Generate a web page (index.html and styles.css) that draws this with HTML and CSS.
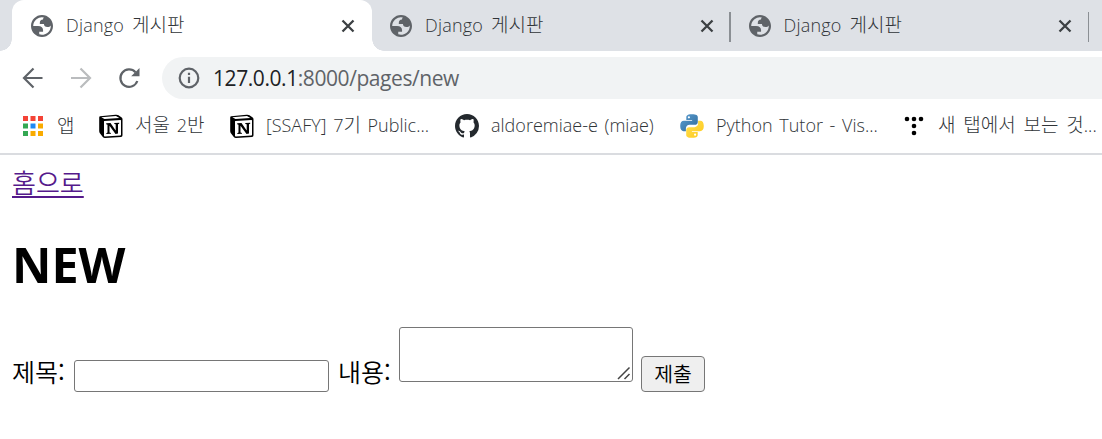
FILE: index.html
```html
<!DOCTYPE html>
<html lang="ko">
<head>
<meta charset="utf-8">
<title>Django 게시판</title>
<link rel="stylesheet" href="styles.css">
</head>
<body>
<svg class="defs" width="0" height="0">
  <symbol id="globe" viewBox="2 2 20 20">
    <path fill="#5f6368" fill-rule="evenodd" d="M12 2c5.523 0 10 4.477 10 10s-4.477 10-10 10S2 17.523 2 12 6.477 2 12 2zM4 12h4.400c3.407.022 4.922 1.730 4.543 5.127H9.488v2.470a8.004 8.004 0 0 0 10.498-8.083C19.327 12.504 18.332 13 17 13c-2.137 0-3.206-.916-3.206-2.750h-3.748c-.274-2.728.683-4.092 2.870-4.092 0-.975.327-1.597.811-1.970A8 8 0 0 0 4 12z"/>
  </symbol>
  <symbol id="close" viewBox="0 0 14 14">
    <path d="M1.500 1.500L12.500 12.500M12.500 1.500L1.500 12.500" fill="none" stroke="#3c4043" stroke-width="2.300"/>
  </symbol>
  <symbol id="notion" viewBox="0 0 24 24">
    <path d="M1.200 2.300L16.500.7Q18.500.5 19.500 1.300L22.700 3.600Q23.500 4.200 23.500 5.200V21.200Q23.500 22.800 22 23L6 24Q4.600 24 3.800 23L.9 19.300Q.2 18.300.2 17V3.500Q.2 2.400 1.200 2.300Z" fill="#000"/>
    <path d="M2.300 3.300L17 2.100L20.300 4.100L5.500 5.100ZM5.300 7L21.500 6Q22 6 22 6.600V20.800Q22 21.400 21.300 21.500L5.800 22.400Q5 22.400 5 21.700V7.500Q5 7 5.300 7Z" fill="#fff"/>
    <path d="M7.200 9.300L11.500 9L16.700 16.500V10.300L15.300 9.900V9L20.200 8.700V9.700L19 10.300V19.600L16.500 19.900L10.500 11.800V18.400L12 19V19.800L7.300 20.100V19.200L8.500 18.600V10.800L7.200 10.200Z" fill="#000"/>
  </symbol>
</svg>

<div class="tabs">
  <div class="tab active"><svg class="fav"><use href="#globe"/></svg><span class="label">Django <span class="ko">게시판</span></span><svg class="x"><use href="#close"/></svg></div>
  <div class="tab"><svg class="fav"><use href="#globe"/></svg><span class="label">Django <span class="ko">게시판</span></span><svg class="x"><use href="#close"/></svg><i class="sep"></i></div>
  <div class="tab"><svg class="fav"><use href="#globe"/></svg><span class="label">Django <span class="ko">게시판</span></span><svg class="x"><use href="#close"/></svg><i class="sep"></i></div>
</div>

<div class="toolbar">
  <svg class="nav" viewBox="0 0 22 22"><path d="M20.500 11H2.500M11.500 1.500L2 11L11.500 20.500"/></svg>
  <svg class="nav off" viewBox="0 0 22 22"><path d="M1 11H19.500M10.500 1.500L20 11L10.500 20.500"/></svg>
  <svg class="nav" viewBox="0 0 22 22"><path d="M19.300 14A8.700 8.700 0 1 1 17.500 5.200"/><path class="head" d="M21.500 1V9.300H13.200Z"/></svg>
  <div class="omnibox">
    <svg class="info" viewBox="0 0 22 22"><circle cx="11" cy="11" r="9.300"/><path d="M11 9.800V16M11 5.800V8"/></svg>
    <span class="url"><b>127.0.0.1</b>:8000/pages/new</span>
  </div>
</div>

<div class="bookmarks">
  <a class="bm apps"><svg viewBox="0 0 20 20"><path fill="#f44336" d="M0 0h5v5H0zM7.500 0h5v5h-5zM15 0h5v5h-5z"/><path fill="#34a853" d="M0 7.500h5v5H0zM0 15h5v5H0z"/><path fill="#1e88f5" d="M7.500 7.500h5v5h-5z"/><path fill="#f9ab00" d="M15 7.500h5v5h-5zM7.500 15h5v5h-5zM15 15h5v5h-5z"/></svg><span class="ko">앱</span></a>
  <a class="bm seoul"><svg><use href="#notion"/></svg><span><span class="ko">서울</span> 2<span class="ko">반</span></span></a>
  <a class="bm ssafy"><svg><use href="#notion"/></svg><span>[SSAFY] 7<span class="ko">기</span> Public...</span></a>
  <a class="bm github"><svg viewBox="0 0 16 16"><path fill="#24292e" d="M8 0C3.580 0 0 3.580 0 8c0 3.540 2.290 6.530 5.470 7.590.4.070.55-.17.55-.38 0-.19-.01-.82-.01-1.490-2.010.37-2.530-.49-2.690-.94-.09-.23-.48-.94-.82-1.130-.28-.15-.68-.52-.01-.53.63-.01 1.080.58 1.230.82.72 1.210 1.870.87 2.330.66.070-.52.28-.87.51-1.070-1.780-.2-3.640-.89-3.640-3.950 0-.87.31-1.590.82-2.150-.08-.2-.36-1.020.08-2.120 0 0 .67-.21 2.200.82.64-.18 1.320-.27 2-.27s1.360.09 2 .27c1.530-1.040 2.200-.82 2.200-.82.44 1.100.16 1.920.08 2.120.51.56.82 1.270.82 2.150 0 3.070-1.870 3.750-3.650 3.950.29.25.54.73.54 1.480 0 1.070-.01 1.930-.01 2.200 0 .21.15.46.55.38A8.010 8.010 0 0 0 16 8c0-4.420-3.580-8-8-8z"/></svg><span>aldoremiae-e (miae)</span></a>
  <a class="bm python"><svg viewBox="0 0 24 24"><defs><linearGradient id="b" x2="1" y2="1"><stop stop-color="#5a9fd4"/><stop offset="1" stop-color="#306998"/></linearGradient><linearGradient id="y" x2="1" y2="1"><stop stop-color="#ffe052"/><stop offset="1" stop-color="#ffc91a"/></linearGradient></defs><path fill="url(#b)" d="M11.900.2C6.500.2 6.300 2.500 6.300 3.100v2.800h5.800v.9H4C1.500 6.800.2 8.700.2 12s1.400 5.200 3.400 5.200h2.300v-2.800c0-2 1.700-3.600 3.600-3.600h5.400c1.600 0 2.900-1.300 2.900-2.900V3.100c0-1.600-1.400-2.900-5.900-2.900z"/><circle cx="8.900" cy="3.300" r="1.100" fill="#fff"/><path fill="url(#y)" d="M12.100 23.800c5.400 0 5.600-2.300 5.600-2.900v-2.800h-5.800v-.9H20c2.500 0 3.800-1.900 3.800-5.200s-1.400-5.200-3.400-5.200h-2.300v2.800c0 2-1.700 3.600-3.600 3.600H9.100c-1.600 0-2.900 1.300-2.900 2.900v4.800c0 1.600 1.400 2.900 5.900 2.900z"/><circle cx="15.100" cy="20.700" r="1.100" fill="#fff"/></svg><span>Python Tutor - Vis...</span></a>
  <a class="bm newtab"><svg viewBox="0 0 20 20"><circle cx="3" cy="3" r="2.300"/><circle cx="10" cy="3" r="2.300"/><circle cx="17" cy="3" r="2.300"/><circle cx="10" cy="10" r="2.300"/><circle cx="10" cy="17" r="2.300"/></svg><span><span class="ko">새 탭에서 보는 것</span>...</span></a>
</div>

<main class="page">
  <a class="home" href="#">홈으로</a>
  <h1>NEW</h1>
  <form class="form">
    <label class="title-label" for="t">제목:</label><input id="t" class="field" type="text">
    <label class="content-label" for="c">내용:</label>
    <div class="area-wrap"><textarea id="c" class="area"></textarea><svg class="grip" viewBox="0 0 14 14"><path d="M1 13L12.500 1.500M7.500 13L12.500 8"/></svg></div>
    <button class="submit" type="button">제출</button>
  </form>
</main>
</body>
</html>
```
FILE: styles.css
```css
* { box-sizing: border-box; }
body { margin: 0; width: 1102px; height: 439px; overflow: hidden; background: #fff; color: #000; font-family: "Open Sans", "Noto Sans CJK KR", sans-serif; }
svg { display: block; flex: none; }
.defs { position: absolute; }
.ko { font-family: "Noto Sans CJK KR", sans-serif; font-weight: 300; font-size: 19px; line-height: 20px; letter-spacing: 0; word-spacing: 2.500px; }

.tabs { display: flex; height: 51px; padding-left: 12px; background: #dee1e6; }
.tab { position: relative; flex: none; display: flex; align-items: center; width: 358.500px; padding-left: 18px; }
.tab.active { width: 360px; background: #fff; border-radius: 12px 12px 0 0; padding-left: 19px; }
.tab.active::before, .tab.active::after { content: ""; position: absolute; bottom: 0; width: 12px; height: 12px; }
.tab.active::before { left: -12px; background: radial-gradient(circle at 0 0, #dee1e6 11.500px, #fff 12px); }
.tab.active::after { right: -12px; background: radial-gradient(circle at 100% 0, #dee1e6 11.500px, #fff 12px); }
.fav { width: 22px; height: 22px; }
.label { width: 265px; margin-left: 13px; padding-bottom: 2px; font-size: 18px; line-height: 26px; font-weight: 350; letter-spacing: .2px; word-spacing: 3px; color: #303438; white-space: nowrap; }
.x { width: 14px; height: 14px; margin-left: 9.500px; }
.sep { position: absolute; right: 0; top: 12px; width: 1.500px; height: 30px; background: #8b8f94; }

.toolbar { display: flex; align-items: center; height: 54px; padding-left: 22px; }
.nav { width: 22px; height: 22px; margin-right: 26px; fill: none; stroke: #5f6368; stroke-width: 2.200; }
.nav.off { stroke: #babcbe; }
.nav .head { fill: #5f6368; stroke: none; }
.omnibox { display: flex; align-items: center; flex: 1; height: 42px; margin-left: -4px; padding-left: 16px; border-radius: 21px 0 0 21px; background: #f1f3f4; }
.info { width: 22px; height: 22px; fill: none; stroke: #5f6368; stroke-width: 2.200; }
.url { margin-left: 13px; font-size: 21px; line-height: 42px; color: #5f6368; letter-spacing: -.43px; white-space: nowrap; }
.url b { font-weight: 400; color: #202124; }

.bookmarks { display: flex; height: 50px; border-bottom: 2px solid #dadce0; font-size: 18px; font-weight: 350; word-spacing: 2px; color: #303438; }
.bm { display: flex; align-items: center; flex: none; height: 41px; white-space: nowrap; }
.bm > span { padding-bottom: 2px; }
.bm svg { width: 24px; height: 24px; margin-right: 12px; }
.apps { width: 99px; padding-left: 23px; }
.bm.apps svg { width: 20px; height: 20px; margin-right: 14px; }
.seoul { width: 131px; }
.ssafy { width: 225px; }
.github { width: 225px; }
.python { width: 224px; }
.bm.newtab svg { width: 20px; height: 20px; margin-right: 14px; }

.page { padding: 10px 12px; font-size: 26px; font-weight: 350; font-family: "Noto Sans CJK KR", sans-serif; }
.home { display: block; width: max-content; line-height: 34px; color: #551a8b; text-decoration-thickness: 2px; text-underline-offset: 3px; }
h1 { margin: 33px 0 0; font: 700 48.500px/64px "Open Sans", sans-serif; }
.form { display: flex; align-items: flex-start; margin-top: 31px; line-height: 36px; font-size: 25px; }
.form label { margin-top: 26px; white-space: nowrap; flex: none; }
.title-label { width: 62px; }
.field { width: 255px; height: 32px; margin: 33px 9px 0 0; border: 1px solid #767676; border-radius: 3px; }
.content-label { width: 61px; }
.area-wrap { position: relative; width: 234px; height: 55px; margin-right: 8px; }
.area { display: block; width: 100%; height: 100%; margin: 0; border: 1px solid #767676; border-radius: 3px; resize: none; }
.grip { position: absolute; right: 2px; bottom: 2px; width: 14px; height: 14px; fill: none; stroke: #444; stroke-width: 1.500; }
.submit { width: 64px; height: 36px; margin-top: 29px; padding: 0 0 2px; border: 1px solid #767676; border-radius: 4px; background: #efefef; font: 350 20.500px/32px "Noto Sans CJK KR", sans-serif; color: #000; }
```
